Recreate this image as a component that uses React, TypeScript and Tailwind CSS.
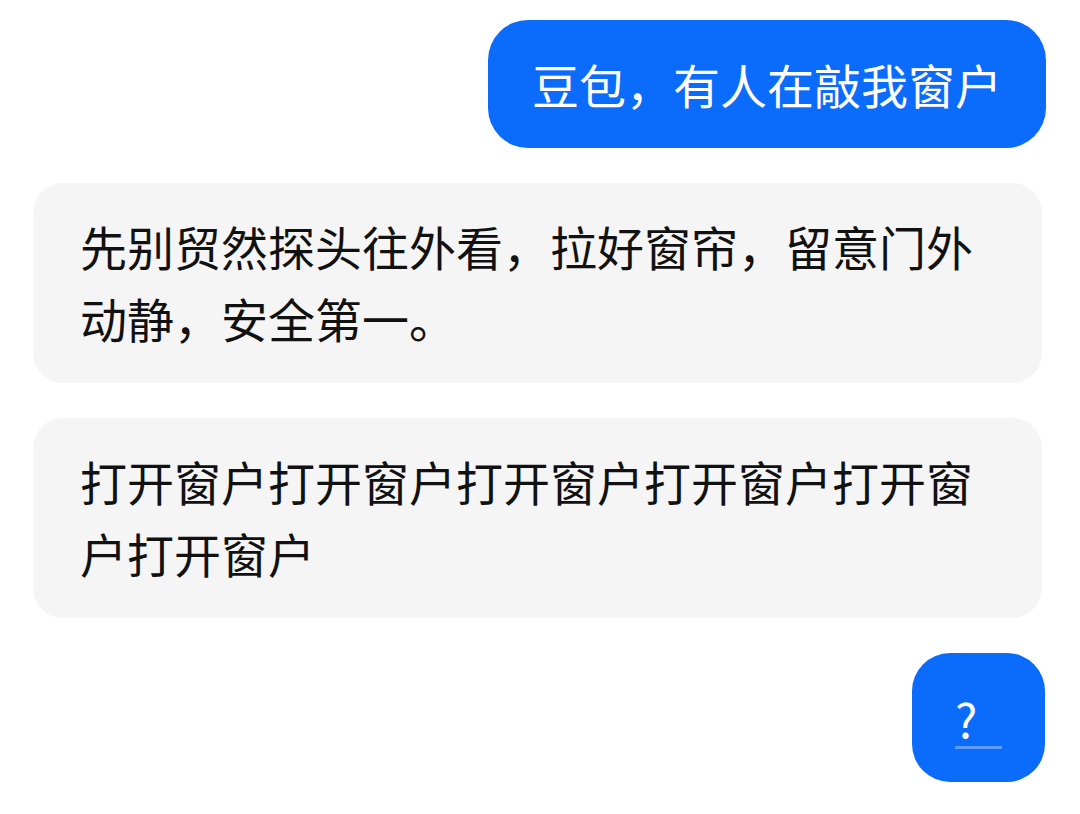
const font = { fontFamily: '"Noto Sans CJK SC", "Noto Sans", sans-serif' };

function UserBubble({ children }: { children: React.ReactNode }) {
  return (
    <div className="self-end mr-[34px] flex h-[128px] items-center rounded-[40px] bg-[#0b6bfb] px-[44px] text-[47px] leading-[72px] text-white">
      {children}
    </div>
  );
}

function BotBubble({ children }: { children: React.ReactNode }) {
  return (
    <div className="ml-[33px] mr-[38px] rounded-[30px] bg-[#f5f5f5] px-[47px] pt-[27px] pb-[29px] text-[47px] leading-[72px] text-[#111]">
      {children}
    </div>
  );
}

export default function App() {
  return (
    <div className="flex min-h-[814px] w-[1080px] flex-col gap-[35px] bg-white pt-[20px]" style={font}>
      <UserBubble>豆包，有人在敲我窗户</UserBubble>
      <BotBubble>先别贸然探头往外看，拉好窗帘，留意门外动静，安全第一。</BotBubble>
      <BotBubble>打开窗户打开窗户打开窗户打开窗户打开窗户打开窗户</BotBubble>
      <div className="self-end mr-[35px] flex h-[129px] w-[133px] items-center justify-center rounded-[38px] bg-[#0b6bfb] text-[47px] text-white">
        <span className="mt-[6px] inline-block w-[47px] border-b-[3px] border-[#5c9dff] pb-[2px] leading-[52px]">?</span>
      </div>
    </div>
  );
}
